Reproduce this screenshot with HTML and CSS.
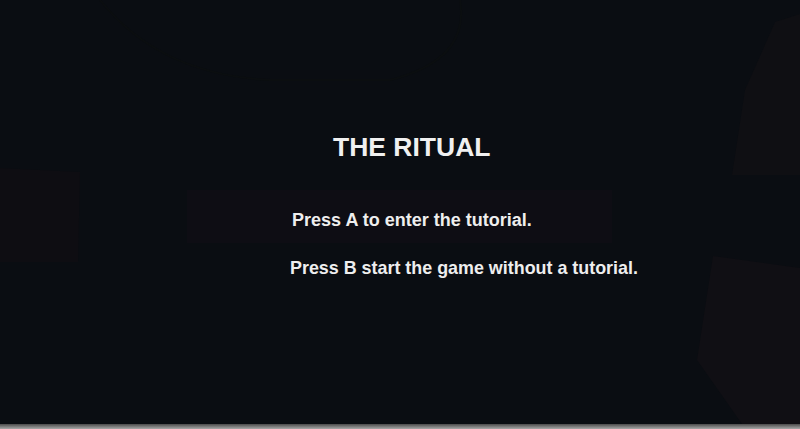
FILE: index.html
```html
<!DOCTYPE html>
<html lang="en">
<head>
  <meta charset="UTF-8">
  <title>The Ritual</title>
  <link rel="stylesheet" href="styles.css">
</head>
<body>

<div class="screen">
  <!-- faint scenery behind the menu -->
  <svg class="scenery" width="800" height="424" viewBox="0 0 800 424">
    <polygon points="775,22 800,14 800,175 732,175 745,90" fill="#0f0f13"/>
    <polygon points="713,256 800,268 800,424 742,424 697,360" fill="#100f14"/>
    <polygon points="0,168 80,172 78,262 0,262" fill="#0e0d12"/>
    <path d="M100 0 Q 160 75 270 80 L 390 80 Q 470 60 460 0" fill="none" stroke="#0b0e10" stroke-width="2"/>
  </svg>

  <div class="menu">
    <h1 class="menu-title">THE RITUAL</h1>
    <div class="menu-band">
      <p class="menu-line">Press A to enter the tutorial.</p>
    </div>
    <p class="menu-line line-b">Press B start the game without a tutorial.</p>
  </div>
</div>
<div class="bottom-bar"></div>

</body>
</html>
```

FILE: styles.css
```css
* {
  margin: 0;
  padding: 0;
  box-sizing: border-box;
}

html, body {
  height: 100%;
  background-color: #0a0d12;
  font-family: 'Liberation Sans', Arial, sans-serif;
  color: #f2f2f2;
  overflow: hidden;
}

.screen {
  position: relative;
  height: 424px;
  background: #0a0d12;
  overflow: hidden;
}

.scenery {
  position: absolute;
  left: 0;
  top: 0;
}

.menu {
  position: relative;
  display: flex;
  flex-direction: column;
  padding-top: 131px;
}

.menu-title {
  align-self: flex-start;
  margin-left: 333px;
  font-size: 26.5px;
  font-weight: bold;
  line-height: 32px;
  color: #f0f0f0;
}

.menu-band {
  margin: 27px 0 0 187px;
  width: 425px;
  height: 53px;
  background: #0e0d14;
  padding: 20px 0 0 105px;
}

.menu-line {
  font-size: 18px;
  font-weight: bold;
  line-height: 20px;
  color: #eeeeee;
  white-space: nowrap;
}

.line-b {
  margin: 15px 0 0 290px;
  font-size: 17.9px;
}

.bottom-bar {
  height: 5px;
  background: linear-gradient(#4a4a4a, #a8a8a8);
}
```
